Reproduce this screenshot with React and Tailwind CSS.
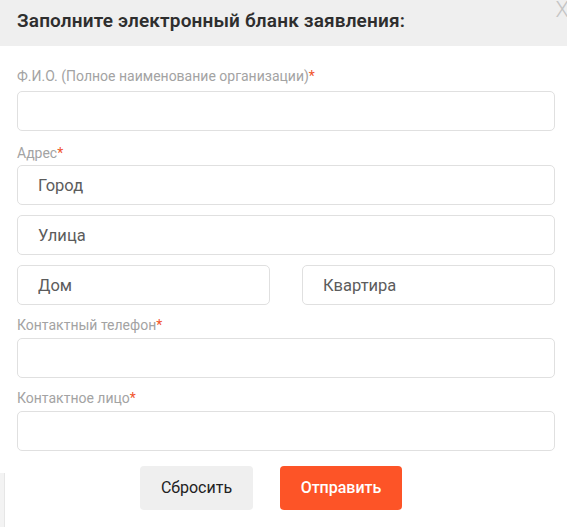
import { useState } from 'react'

function Label({ children }) {
  return (
    <div className="h-[20px] text-[14px] leading-[20px] text-[#a3a3a3]">
      {children}<span className="text-[#f0542c]">*</span>
    </div>
  )
}

function Field({ placeholder = '', className = '' }) {
  return (
    <input
      type="text"
      placeholder={placeholder}
      className={`h-[40px] w-full rounded-[5px] border border-[#e0e0e0] bg-white px-[20px] text-[16.5px] text-[#555] placeholder-[#5c5c5c] outline-none ${className}`}
    />
  )
}

export default function App() {
  const [sent, setSent] = useState(false)

  return (
    <div className="relative h-[527px] w-[567px] overflow-hidden bg-white font-['Roboto',sans-serif]">
      {/* Header */}
      <div className="flex h-[46px] items-center bg-[#efefef] pb-[4px] pl-[17px]">
        <h2 className="text-[19px] font-semibold tracking-[0.15px] text-[#2e2e2e]">Заполните электронный бланк заявления:</h2>
      </div>
      <button className="absolute right-[-2px] top-[-4px] text-[22px] font-light leading-[28px] text-[#c4c4c4]">X</button>

      <form className="flex flex-col pl-[17px] pr-[12px] pt-[20px]" onSubmit={e => { e.preventDefault(); setSent(true) }}>
        <div>
          <Label>Ф.И.О. (Полное наименование организации)</Label>
          <div className="mt-[5px]"><Field /></div>
        </div>

        <div className="mt-[12px]">
          <Label>Адрес</Label>
          <div className="mt-[2px] flex flex-col gap-[10px]">
            <Field placeholder="Город" />
            <Field placeholder="Улица" />
            <div className="flex gap-[32px]">
              <Field placeholder="Дом" />
              <Field placeholder="Квартира" />
            </div>
          </div>
        </div>

        <div className="mt-[10px]">
          <Label>Контактный телефон</Label>
          <div className="mt-[3px]"><Field /></div>
        </div>

        <div className="mt-[10px]">
          <Label>Контактное лицо</Label>
          <div className="mt-[3px]"><Field /></div>
        </div>

        <div className="mt-[15px] flex justify-center gap-[27px] pr-[30px]">
          <button type="reset" className="h-[44px] w-[113px] rounded-[4px] bg-[#efefef] text-[16px] text-[#222]">Сбросить</button>
          <button type="submit" className="h-[44px] w-[122px] rounded-[4px] bg-[#fd5427] text-[16px] font-medium text-white">
            {sent ? 'Отправлено' : 'Отправить'}
          </button>
        </div>
      </form>

      <div className="absolute bottom-0 left-0 h-[54px] w-[5px] border-r border-[#e6e6e6] bg-[#f3f3f3]" />
    </div>
  )
}
